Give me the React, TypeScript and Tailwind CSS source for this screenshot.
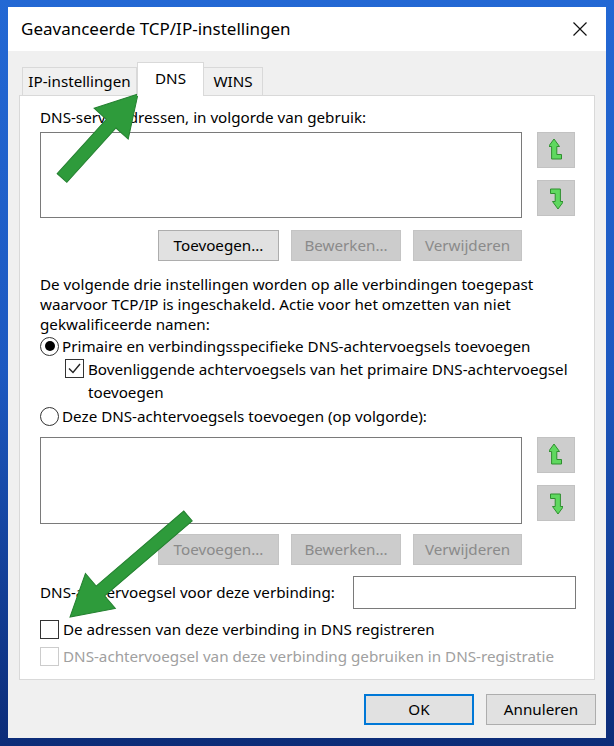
import React from 'react';

function OrderButton({ dir }: { dir: 'up' | 'down' }) {
  return (
    <div className="w-[38px] h-[36px] bg-[#cdcdcd] border border-[#c2c2c2] flex items-center justify-center">
      <svg width="14" height="24" viewBox="0 0 14 24" className={dir === 'down' ? 'rotate-180' : ''}>
        <path
          d="M5 1 L10.5 8.5 L7.8 8.5 L7.8 16.5 L12.5 16.5 L12.5 21 L2.6 21 L2.6 8.5 L-0.5 8.5 Z"
          fill="#5fd85f"
          stroke="#2f8f2f"
          strokeWidth="1"
          strokeLinejoin="round"
        />
      </svg>
    </div>
  );
}

function Btn({ label, w, disabled }: { label: string; w: string; disabled?: boolean }) {
  return (
    <div
      className={
        'h-[31px] flex items-center justify-center border ' +
        w +
        (disabled
          ? ' bg-[#cccccc] border-[#c4c4c4] text-[#8a8a8a]'
          : ' bg-[#e1e1e1] border-[#adadad] text-black')
      }
    >
      {label}
    </div>
  );
}

function Radio({ checked }: { checked?: boolean }) {
  return (
    <div className="w-[19px] h-[19px] rounded-full border border-[#333] bg-white flex items-center justify-center shrink-0">
      {checked && <div className="w-[10px] h-[10px] rounded-full bg-black" />}
    </div>
  );
}

function Check({ checked, disabled }: { checked?: boolean; disabled?: boolean }) {
  return (
    <div
      className={
        'w-[19px] h-[19px] border bg-white flex items-center justify-center shrink-0 ' +
        (disabled ? 'border-[#cccccc]' : 'border-[#333]')
      }
    >
      {checked && (
        <svg width="15" height="15" viewBox="0 0 15 15">
          <path d="M2 7.5 L6 11.5 L13 3" fill="none" stroke="#222" strokeWidth="1.4" />
        </svg>
      )}
    </div>
  );
}

// big green pointer drawn along the x axis, then rotated into place
function Pointer({ x1, y1, x2, y2 }: { x1: number; y1: number; x2: number; y2: number }) {
  const len = Math.hypot(x2 - x1, y2 - y1);
  const ang = (Math.atan2(y2 - y1, x2 - x1) * 180) / Math.PI;
  const head = 40;
  const hw = 23;
  const sw = 6.5;
  const d = `M0 ${-sw} L${len - head} ${-sw} L${len - head} ${-hw} L${len} 0 L${len - head} ${hw} L${len - head} ${sw} L0 ${sw} Z`;
  return (
    <path d={d} fill="#2e9b3b" stroke="#248030" strokeWidth="1" transform={`translate(${x1} ${y1}) rotate(${ang})`} />
  );
}

export default function App() {
  return (
    <div className="relative w-[614px] h-[746px] bg-gradient-to-b from-[#2368d4] via-[#1c58c0] to-[#0c2c78] pt-[7px] pl-[8px] font-['Noto_Sans',sans-serif] text-[15.2px] text-black">
      <div className="w-[598px] h-[731px] bg-[#f0f0f0] flex flex-col">
        {/* title bar */}
        <div className="h-[44px] bg-white flex items-center justify-between pl-[13px] pr-[19px]">
          <span className="text-[17px]">Geavanceerde TCP/IP-instellingen</span>
          <svg width="14" height="14" viewBox="0 0 14 14">
            <path d="M0.5 0.5 L13.5 13.5 M13.5 0.5 L0.5 13.5" stroke="#111" strokeWidth="1.2" />
          </svg>
        </div>

        <div className="px-[11px]">
          {/* tabs */}
          <div className="mt-[11px] h-[33px] flex items-end pl-[3px]">
            <div className="w-[115px] h-[28px] border border-b-0 border-[#d9d9d9] bg-[#f0f0f0] flex items-center justify-center">
              IP-instellingen
            </div>
            <div className="relative z-10 -mb-px w-[67px] h-[34px] border border-b-0 border-[#d9d9d9] bg-white flex items-start justify-center pt-[4px]">
              DNS
            </div>
            <div className="w-[59px] h-[28px] border border-b-0 border-l-0 border-[#d9d9d9] bg-[#f0f0f0] flex items-center justify-center">
              WINS
            </div>
          </div>

          {/* panel */}
          <div className="h-[585px] border border-[#d9d9d9] bg-white pl-[20px] pt-[11px]">
            <div className="leading-[20px]">DNS-serveradressen, in volgorde van gebruik:</div>
            <div className="mt-[5px] flex items-start">
              <div className="w-[482px] h-[86px] border border-[#7a7a7a] bg-white" />
              <div className="ml-[15px] flex flex-col gap-[12px]">
                <OrderButton dir="up" />
                <OrderButton dir="down" />
              </div>
            </div>
            <div className="mt-[12px] w-[482px] flex justify-end gap-[12px]">
              <Btn label="Toevoegen..." w="w-[121px]" />
              <Btn label="Bewerken..." w="w-[110px]" disabled />
              <Btn label="Verwijderen" w="w-[109px]" disabled />
            </div>

            <p className="mt-[13px] leading-[20px] pr-[30px]">
              De volgende drie instellingen worden op alle verbindingen toegepast waarvoor TCP/IP is ingeschakeld. Actie voor het omzetten van niet gekwalificeerde namen:
            </p>

            <div className="mt-[1px] h-[22px] flex items-center gap-[3px]">
              <Radio checked />
              <span>Primaire en verbindingsspecifieke DNS-achtervoegsels toevoegen</span>
            </div>
            <div className="mt-[1px] pl-[25px] flex items-start gap-[4px]">
              <div className="pt-[1px]">
                <Check checked />
              </div>
              <span className="leading-[23px]">
                Bovenliggende achtervoegsels van het primaire DNS-achtervoegsel
                <br />
                toevoegen
              </span>
            </div>
            <div className="mt-[1px] h-[22px] flex items-center gap-[3px]">
              <Radio />
              <span>Deze DNS-achtervoegsels toevoegen (op volgorde):</span>
            </div>

            <div className="mt-[10px] flex items-start">
              <div className="w-[482px] h-[87px] border border-[#7a7a7a] bg-white" />
              <div className="ml-[15px] flex flex-col gap-[12px]">
                <OrderButton dir="up" />
                <OrderButton dir="down" />
              </div>
            </div>
            <div className="mt-[10px] w-[482px] flex justify-end gap-[12px]">
              <Btn label="Toevoegen..." w="w-[121px]" disabled />
              <Btn label="Bewerken..." w="w-[110px]" disabled />
              <Btn label="Verwijderen" w="w-[109px]" disabled />
            </div>

            <div className="mt-[11px] w-[536px] flex items-center justify-between">
              <span>DNS-achtervoegsel voor deze verbinding:</span>
              <div className="w-[223px] h-[33px] border border-[#7a7a7a] bg-white" />
            </div>

            <div className="mt-[9px] h-[22px] flex items-center gap-[4px]">
              <Check />
              <span>De adressen van deze verbinding in DNS registreren</span>
            </div>
            <div className="mt-[5px] h-[22px] flex items-center gap-[4px] text-[#a0a0a0]">
              <Check disabled />
              <span>DNS-achtervoegsel van deze verbinding gebruiken in DNS-registratie</span>
            </div>
          </div>
        </div>

        {/* dialog buttons */}
        <div className="mt-[14px] flex justify-end gap-[12px] pr-[10px]">
          <div className="w-[110px] h-[31px] border-2 border-[#0078d7] bg-[#e1e1e1] flex items-center justify-center">
            OK
          </div>
          <div className="w-[110px] h-[31px] border border-[#adadad] bg-[#e1e1e1] flex items-center justify-center">
            Annuleren
          </div>
        </div>
      </div>

      <svg className="absolute inset-0 pointer-events-none" width="614" height="746">
        <Pointer x1={62} y1={178} x2={138} y2={94} />
        <Pointer x1={188} y1={516} x2={70} y2={617} />
      </svg>
    </div>
  );
}
